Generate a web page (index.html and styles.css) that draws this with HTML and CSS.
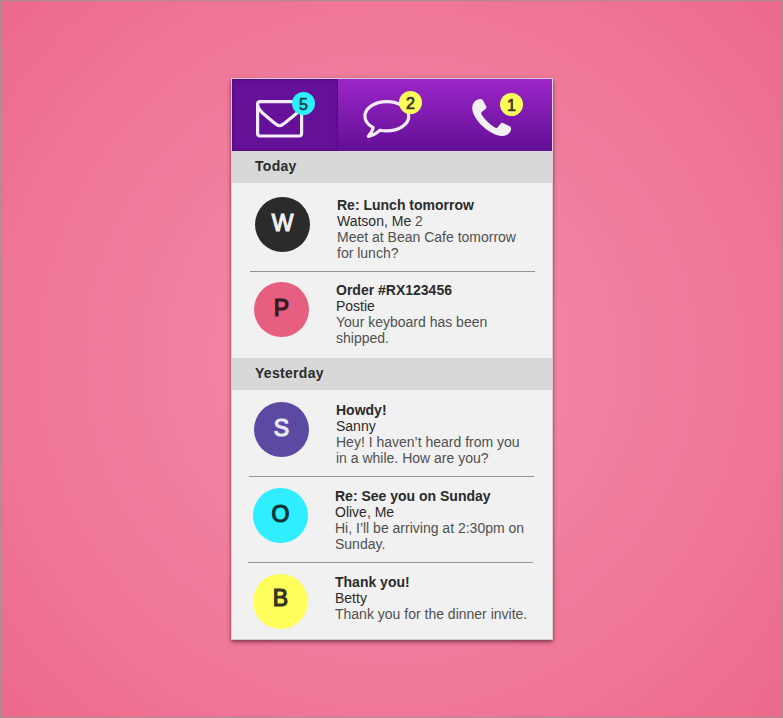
FILE: index.html
```html
<!DOCTYPE html>
<html lang="en">
<head>
<meta charset="utf-8">
<title>Inbox</title>
<link rel="stylesheet" href="styles.css">
</head>
<body>
<main class="widget">
  <nav class="tabs">
    <a class="tab tab-active">
      <span class="icon icon-mail">
        <svg viewBox="256 100 48 38" width="48" height="38"><rect x="257.6" y="101.6" width="44" height="34.4" rx="2.500"/><path d="M257.800 105.500C258.300 109.500 261 112 265.500 115.500L275 123.400Q279.600 127.800 284.200 123.400L294 115.500C298.500 112 301.200 109.500 301.800 105.500"/></svg>
        <span class="badge badge-cyan">5</span>
      </span>
    </a>
    <a class="tab">
      <span class="icon icon-chat">
        <svg viewBox="363 99 48 40" width="48" height="40"><path d="M386.800 101.600C399 101.600 408.700 108 408.700 116.200C408.700 124.400 399 130.900 386.800 130.900C384.500 130.900 382 130.600 380 130.200C376.500 133.500 372.500 135.800 368.300 136.400C371 133.600 372.700 130.700 373.200 127.600C368 124.800 364.900 120.800 364.900 116.200C364.900 108 374.600 101.600 386.800 101.600Z"/></svg>
        <span class="badge badge-yellow">2</span>
      </span>
    </a>
    <a class="tab">
      <span class="icon icon-phone">
        <svg viewBox="472 98 40 39" width="40" height="39"><path d="M480.600 98.900C482 98.900 482.700 99.700 483.300 100.900L486.200 106.600C486.700 107.700 486.500 108.300 485.500 109L482 111.700C481 112.600 481 113.500 481.700 114.800C484.900 119.700 489 123.900 494.400 127.200C496 128.200 497 128.300 498 127.100L500.600 123.600C501.300 122.600 502 122.500 503 123L509.600 126.300C510.900 127 511.300 127.800 511 129.300C510.500 133.500 506.500 136 501.600 135.900C497.500 135.800 493 133.800 488 130.400C481.500 125.900 475.500 119.600 473 112.500C470.700 105.800 473.800 99 480.600 98.900Z"/></svg>
        <span class="badge badge-yellow">1</span>
      </span>
    </a>
  </nav>

  <section class="group">
    <h2 class="group-title">Today</h2>
    <article class="message message-roomy">
      <div class="avatar avatar-dark">W</div>
      <div class="text">
        <h3>Re: Lunch tomorrow</h3>
        <p class="from">Watson, Me <span class="count">2</span></p>
        <p class="preview">Meet at Bean Cafe tomorrow<br>for lunch?</p>
      </div>
    </article>
    <hr class="rule">
    <article class="message shift-1">
      <div class="avatar avatar-pink">P</div>
      <div class="text">
        <h3>Order #RX123456</h3>
        <p class="from">Postie</p>
        <p class="preview">Your keyboard has been<br>shipped.</p>
      </div>
    </article>
  </section>

  <section class="group">
    <h2 class="group-title">Yesterday</h2>
    <article class="message message-first shift-1">
      <div class="avatar avatar-purple">S</div>
      <div class="text">
        <h3>Howdy!</h3>
        <p class="from">Sanny</p>
        <p class="preview">Hey! I haven’t heard from you<br>in a while. How are you?</p>
      </div>
    </article>
    <hr class="rule shift-1">
    <article class="message message-middle shift-2">
      <div class="avatar avatar-cyan">O</div>
      <div class="text">
        <h3>Re: See you on Sunday</h3>
        <p class="from">Olive, Me</p>
        <p class="preview">Hi, I’ll be arriving at 2:30pm on<br>Sunday.</p>
      </div>
    </article>
    <hr class="rule shift-2">
    <article class="message message-last shift-2">
      <div class="avatar avatar-yellow">B</div>
      <div class="text">
        <h3>Thank you!</h3>
        <p class="from">Betty</p>
        <p class="preview">Thank you for the dinner invite.</p>
      </div>
    </article>
  </section>
</main>
</body>
</html>
```
FILE: styles.css
```css
* { box-sizing: border-box; }

body {
  margin: 0;
  height: 718px;
  padding: 77px 0 0 230px;
  overflow: hidden;
  border: 1px solid #a68f97;
  background: radial-gradient(circle 530px at 391px 359px, #f58fae 0%, #ec6a8c 100%);
  font-family: "Liberation Sans", Arial, sans-serif;
  font-size: 14px;
  line-height: 16px;
  color: #2b2b2b;
}

h2, h3, p { margin: 0; font-size: inherit; }

.widget {
  width: 322px;
  height: 562px;
  border: 1px solid #d9cdd3;
  background: #f1f1f1;
  box-shadow: 0 2px 4px rgba(50, 10, 25, 0.6);
}

.tabs {
  display: grid;
  grid-template-columns: 106px 107px 107px;
  height: 72px;
  background: linear-gradient(#9c25c8, #620f95);
}

.tab-active {
  background: #641097;
  box-shadow: inset 0 0 3px rgba(40, 0, 70, 0.6);
}

.icon { display: block; position: relative; }
.icon svg { display: block; fill: none; stroke: #f3ebf7; stroke-width: 3.2; stroke-linejoin: round; }
.icon-mail { width: 48px; margin: 21px 0 0 24px; }
.icon-chat { width: 48px; margin: 20px 0 0 25px; }
.icon-phone { width: 40px; margin: 19px 0 0 27px; }
.icon-phone svg { fill: #f1f1f1; stroke: none; }

.badge {
  position: absolute;
  width: 23px;
  height: 23px;
  border-radius: 50%;
  font-size: 16px;
  -webkit-text-stroke: 0.700px currentColor;
  line-height: 25px;
  text-align: center;
}
.icon-mail .badge { left: 36px; top: -8px; }
.icon-chat .badge { left: 36px; top: -8px; }
.icon-phone .badge { left: 28px; top: -5px; }
.badge-cyan { background: #2eeeff; color: #15484d; }
.badge-yellow { background: #ffff5c; color: #35351c; }

.group-title {
  height: 32px;
  padding: 0 23px;
  background: #d8d8d8;
  line-height: 31px;
  letter-spacing: 0.300px;
}

.message { display: flex; gap: 27px; height: 86px; padding: 10px 0 0 23px; }
.message-roomy { height: 88px; padding-top: 14px; }
.message-first { padding-top: 12px; }
.message-middle { height: 85px; padding-top: 11px; }
.message-last { height: 76px; padding-top: 11px; }

.rule { width: 285px; height: 1px; margin: 0 0 0 18px; border: 0; background: #929292; }
.shift-1 { margin-left: -1px; }
.shift-2 { margin-left: -2px; }
.rule.shift-1 { margin-left: 17px; }
.rule.shift-2 { margin-left: 16px; }

.avatar {
  flex: none;
  width: 55px;
  height: 55px;
  border-radius: 50%;
  font-size: 23px;
  -webkit-text-stroke: 1.200px currentColor;
  line-height: 52px;
  text-align: center;
}
.avatar-dark { background: #2b2b2b; color: #f1f1f1; }
.avatar-pink { background: #e75e80; color: #351a20; }
.avatar-purple { background: #5c4aa2; color: #ebe9f5; }
.avatar-cyan { background: #2eeeff; color: #103336; }
.avatar-yellow { background: #ffff5c; color: #35351c; line-height: 49px; }

.text { white-space: nowrap; }
.count, .preview { color: #505050; }
```
